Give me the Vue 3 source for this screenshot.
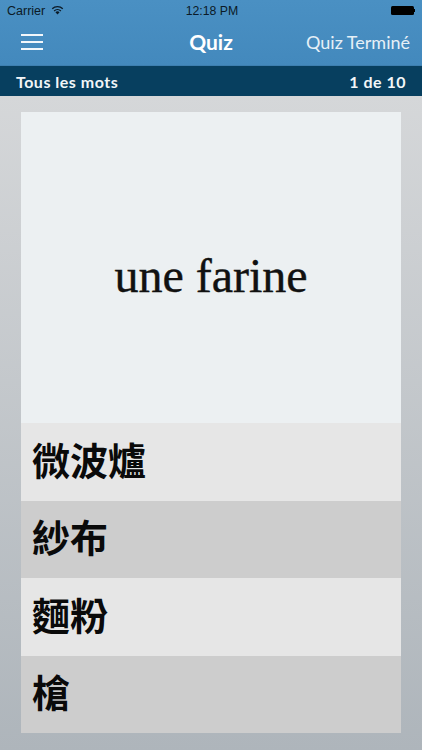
<script setup>
const answers = ['微波爐', '紗布', '麵粉', '槍']
</script>

<template>
  <div class="screen">
    <header class="top">
      <div class="status">
        <div class="status-left">
          <span>Carrier</span>
          <svg class="wifi" width="13" height="10" viewBox="0 0 14 11">
            <path d="M7 10.4 4.7 8a3.2 3.2 0 0 1 4.6 0Z" fill="#0b1a26" />
            <path d="M3.3 6.5a5.4 5.4 0 0 1 7.4 0" fill="none" stroke="#0b1a26" stroke-width="1.5" />
            <path d="M1.2 4.1a8.4 8.4 0 0 1 11.6 0" fill="none" stroke="#0b1a26" stroke-width="1.5" />
          </svg>
        </div>
        <span class="clock">12:18 PM</span>
        <div class="battery"><i class="cell"></i><i class="nub"></i></div>
      </div>
      <nav class="nav">
        <div class="menu"><i></i><i></i><i></i></div>
        <strong class="title">Quiz</strong>
        <span class="done">Quiz Terminé</span>
      </nav>
    </header>
    <div class="sub">
      <span>Tous les mots</span>
      <span>1 de 10</span>
    </div>
    <main class="body">
      <section class="card">
        <div class="prompt">une farine</div>
        <div v-for="a in answers" :key="a" class="answer">{{ a }}</div>
      </section>
    </main>
  </div>
</template>

<style scoped>
.screen {
  width: 422px;
  height: 750px;
  display: flex;
  flex-direction: column;
  overflow: hidden;
  font-family: Lato, "Open Sans", sans-serif;
}
.top {
  height: 66px;
  background: linear-gradient(#4a90c3, #4389bd);
  border-bottom: 1px solid #3d7fb0;
  box-sizing: border-box;
  display: flex;
  flex-direction: column;
  flex: none;
}
.status {
  height: 21px;
  padding: 0 7px;
  display: grid;
  grid-template-columns: 1fr auto 1fr;
  align-items: center;
  font-family: "Liberation Sans", sans-serif;
  font-size: 12.5px;
  color: #0b1a26;
}
.status-left {
  display: flex;
  align-items: center;
  gap: 6px;
}
.wifi {
  margin-top: -2px;
}
.clock {
  margin-left: 2px;
  font-size: 12.3px;
}
.battery {
  justify-self: end;
  display: flex;
  align-items: center;
}
.cell {
  width: 23px;
  height: 9px;
  background: #000;
  border-radius: 1.5px;
}
.nub {
  width: 1.5px;
  height: 3px;
  background: #000;
}
.nav {
  flex: 1;
  display: grid;
  grid-template-columns: 1fr auto 1fr;
  align-items: center;
  padding: 0 12px 3px;
  color: #fff;
}
.menu {
  display: flex;
  flex-direction: column;
  gap: 5px;
  width: 22px;
  margin-left: 9px;
}
.menu i {
  height: 2px;
  background: #f2f7fb;
}
.title {
  font-size: 21px;
  font-weight: 700;
}
.done {
  justify-self: end;
  font-size: 18px;
  color: #e6f0f7;
  white-space: nowrap;
}
.sub {
  height: 30px;
  flex: none;
  background: #073f5f;
  display: flex;
  justify-content: space-between;
  align-items: center;
  padding: 0 16px;
  color: #f2f6f8;
  font-size: 16px;
  font-weight: 700;
  letter-spacing: 0.5px;
}
.body {
  flex: 1;
  background: linear-gradient(#d5d7d9, #aeb5bb);
  padding: 16px 21px 17px;
  display: flex;
}
.card {
  flex: 1;
  display: grid;
  grid-template-rows: 311px 78px 77px 78px 77px;
}
.prompt {
  background: #ecf0f2;
  display: flex;
  align-items: center;
  justify-content: center;
  padding-top: 16px;
  font-family: "Liberation Serif", serif;
  font-size: 48px;
  color: #111;
  -webkit-text-stroke: 0.4px #111;
}
.answer {
  display: flex;
  align-items: center;
  padding: 0 0 8px 11px;
  background: #e6e6e6;
  font-family: "Noto Sans CJK TC", sans-serif;
  font-size: 38px;
  font-weight: 700;
  color: #0a0a0a;
}
.answer:nth-child(odd) {
  background: #cdcdcd;
}
</style>
